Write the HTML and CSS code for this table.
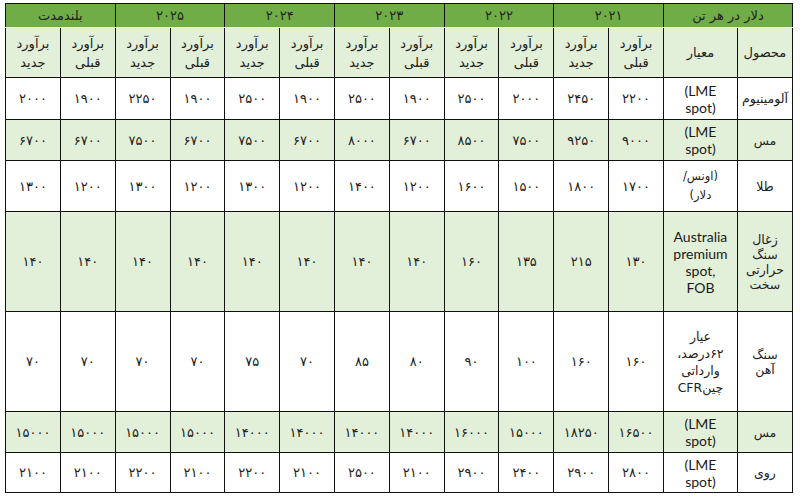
FILE: index.html
```html
<!DOCTYPE html>
<html lang="fa">
<head>
<meta charset="utf-8">
<title>جدول برآورد قیمت</title>
<link rel="stylesheet" href="styles.css">
</head>
<body>
<table class="t" dir="rtl">
<colgroup>
<col class="c-prod"><col class="c-crit">
<col class="c-d"><col class="c-d"><col class="c-d"><col class="c-d"><col class="c-d"><col class="c-d">
<col class="c-d"><col class="c-d"><col class="c-d"><col class="c-d"><col class="c-d"><col class="c-d">
</colgroup>
<tr class="h1">
<th colspan="2">دلار در هر تن</th>
<th colspan="2" class="yr">۲۰۲۱</th>
<th colspan="2" class="yr">۲۰۲۲</th>
<th colspan="2" class="yr">۲۰۲۳</th>
<th colspan="2" class="yr">۲۰۲۴</th>
<th colspan="2" class="yr">۲۰۲۵</th>
<th colspan="2">بلندمدت</th>
</tr>
<tr class="h2 g">
<td>محصول</td><td>معیار</td>
<td>برآورد<br>قبلی</td><td>برآورد<br>جدید</td>
<td>برآورد<br>قبلی</td><td>برآورد<br>جدید</td>
<td>برآورد<br>قبلی</td><td>برآورد<br>جدید</td>
<td>برآورد<br>قبلی</td><td>برآورد<br>جدید</td>
<td>برآورد<br>قبلی</td><td>برآورد<br>جدید</td>
<td>برآورد<br>قبلی</td><td>برآورد<br>جدید</td>
</tr>
<tr class="r42 d">
<td>آلومینیوم</td><td class="en"><span dir="ltr">(LME<br>spot)</span></td>
<td>۲۲۰۰</td><td>۲۴۵۰</td><td>۲۰۰۰</td><td>۲۵۰۰</td><td>۱۹۰۰</td><td>۲۵۰۰</td>
<td>۱۹۰۰</td><td>۲۵۰۰</td><td>۱۹۰۰</td><td>۲۲۵۰</td><td>۱۹۰۰</td><td>۲۰۰۰</td>
</tr>
<tr class="r41 g d">
<td>مس</td><td class="en"><span dir="ltr">(LME<br>spot)</span></td>
<td>۹۰۰۰</td><td>۹۲۵۰</td><td>۷۵۰۰</td><td>۸۵۰۰</td><td>۶۷۰۰</td><td>۸۰۰۰</td>
<td>۶۷۰۰</td><td>۷۵۰۰</td><td>۶۷۰۰</td><td>۷۵۰۰</td><td>۶۷۰۰</td><td>۶۷۰۰</td>
</tr>
<tr class="r51 d">
<td>طلا</td><td class="fa-sm">(اونس/<br>دلار)</td>
<td>۱۷۰۰</td><td>۱۸۰۰</td><td>۱۵۰۰</td><td>۱۶۰۰</td><td>۱۲۰۰</td><td>۱۴۰۰</td>
<td>۱۲۰۰</td><td>۱۳۰۰</td><td>۱۲۰۰</td><td>۱۳۰۰</td><td>۱۲۰۰</td><td>۱۳۰۰</td>
</tr>
<tr class="r100 g d">
<td class="multi">زغال<br>سنگ<br>حرارتی<br>سخت</td><td class="en"><span dir="ltr">Australia<br>premium<br>spot,<br>FOB</span></td>
<td>۱۳۰</td><td>۲۱۵</td><td>۱۳۵</td><td>۱۶۰</td><td>۱۴۰</td><td>۱۴۰</td>
<td>۱۴۰</td><td>۱۴۰</td><td>۱۴۰</td><td>۱۴۰</td><td>۱۴۰</td><td>۱۴۰</td>
</tr>
<tr class="r100 d">
<td class="multi">سنگ<br>آهن</td><td class="multi crit-iron">عیار<br>۶۲درصد،<br>وارداتی<br>چینCFR</td>
<td>۱۶۰</td><td>۱۶۰</td><td>۱۰۰</td><td>۹۰</td><td>۸۰</td><td>۸۵</td>
<td>۷۰</td><td>۷۵</td><td>۷۰</td><td>۷۰</td><td>۷۰</td><td>۷۰</td>
</tr>
<tr class="r41 g d">
<td>مس</td><td class="en"><span dir="ltr">(LME<br>spot)</span></td>
<td>۱۶۵۰۰</td><td>۱۸۲۵۰</td><td>۱۵۰۰۰</td><td>۱۶۰۰۰</td><td>۱۴۰۰۰</td><td>۱۴۰۰۰</td>
<td>۱۴۰۰۰</td><td>۱۴۰۰۰</td><td>۱۵۰۰۰</td><td>۱۵۰۰۰</td><td>۱۵۰۰۰</td><td>۱۵۰۰۰</td>
</tr>
<tr class="r40 d">
<td>روی</td><td class="en"><span dir="ltr">(LME<br>spot)</span></td>
<td>۲۸۰۰</td><td>۲۹۰۰</td><td>۲۴۰۰</td><td>۲۹۰۰</td><td>۲۱۰۰</td><td>۲۵۰۰</td>
<td>۲۱۰۰</td><td>۲۲۰۰</td><td>۲۱۰۰</td><td>۲۲۰۰</td><td>۲۱۰۰</td><td>۲۱۰۰</td>
</tr>
</table>
</body>
</html>
```

FILE: styles.css
```css
html, body {
  margin: 0;
  padding: 0;
  background: #ffffff;
}
body {
  padding: 3px 0 0 5px;
  font-family: "DejaVu Sans", sans-serif;
  color: #222222;
}
.t {
  border-collapse: collapse;
  table-layout: fixed;
  width: 787px;
  font-size: 12.5px;
}
.c-prod { width: 55px; }
.c-crit { width: 74px; }
.c-d { width: 54.83px; }
.t th, .t td {
  border: 1px solid #111111;
  text-align: center;
  vertical-align: middle;
  padding: 0 2px;
  font-weight: normal;
  line-height: 15px;
}
.h1 th {
  background: #70ad47;
  height: 23px;
  border-bottom: 1px solid #e8f1e0;
  font-size: 13px;
}
.h2 td {
  height: 49px;
  line-height: 19px;
  font-size: 13px;
}
.d td:nth-child(n+3) {
  font-size: 13px;
}
.g td { background: #e2efd9; }
.r42 td { height: 41px; }
.r41 td { height: 40px; }
.r40 td { height: 39px; }
.r51 td { height: 50px; }
.r100 td { height: 99px; }
.t td.en {
  font-family: Lato, "Open Sans", sans-serif;
  font-size: 14px;
  line-height: 17px;
  color: #1a1a1a;
}
.t td.fa-sm { font-size: 11.5px; line-height: 19px; }
.t td.crit-iron { line-height: 17px; font-size: 12.5px; }
```
